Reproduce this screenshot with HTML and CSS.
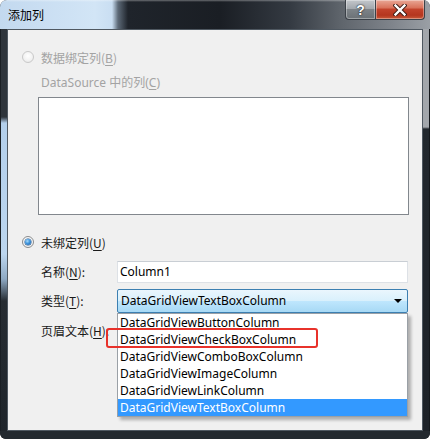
FILE: index.html
```html
<!DOCTYPE html>
<html lang="zh-CN">
<head>
<meta charset="utf-8">
<title>添加列</title>
<link rel="stylesheet" href="styles.css">
</head>
<body>
<div class="window">
  <div class="titlebar">
    <span class="title">添加列</span>
    <div class="caption-btns">
      <div class="cbtn help"><span>?</span></div>
      <div class="cbtn close">
        <svg width="14" height="12" viewBox="0 0 14 12">
          <path d="M2.5 1.5 L11.5 10.5 M11.5 1.5 L2.5 10.5" stroke="#3a1a14" stroke-width="4.2" stroke-linecap="square" fill="none"/>
          <path d="M2.5 1.5 L11.5 10.5 M11.5 1.5 L2.5 10.5" stroke="#ffffff" stroke-width="2.4" stroke-linecap="square" fill="none"/>
        </svg>
      </div>
    </div>
  </div>
  <div class="body">
    <div class="frame-l"></div>
    <div class="client">
      <div class="radio-row disabled">
        <span class="radio"></span>
        <span class="label">数据绑定列(<u>B</u>)</span>
      </div>
      <div class="caption disabled">DataSource 中的列(<u>C</u>)</div>
      <div class="listbox"></div>

      <div class="radio-row second">
        <span class="radio checked"></span>
        <span class="label">未绑定列(<u>U</u>)</span>
      </div>

      <div class="field first">
        <span class="flabel">名称(<u>N</u>):</span>
        <div class="textbox">Column1</div>
      </div>
      <div class="field type">
        <span class="flabel">类型(<u>T</u>):</span>
        <div class="combo">
          <span class="combo-text">DataGridViewTextBoxColumn</span>
          <span class="arrow"></span>
          <ul class="dropdown">
            <li>DataGridViewButtonColumn</li>
            <li>DataGridViewCheckBoxColumn</li>
            <li>DataGridViewComboBoxColumn</li>
            <li>DataGridViewImageColumn</li>
            <li>DataGridViewLinkColumn</li>
            <li class="selected">DataGridViewTextBoxColumn</li>
          </ul>
        </div>
      </div>
      <div class="field header">
        <span class="flabel">页眉文本(<u>H</u>):</span>
        <div class="textbox"></div>
      </div>

      <div class="highlight"></div>
    </div>
    <div class="frame-r"></div>
  </div>
  <div class="frame-b"></div>
</div>
</body>
</html>
```

FILE: styles.css
```css
html, body {
  margin: 0;
  padding: 0;
  background: #ffffff;
}

body {
  font-family: "Noto Sans", "Noto Sans CJK SC", sans-serif;
  font-size: 12px;
  color: #1a1a1a;
}

.window {
  width: 430px;
  height: 439px;
  display: flex;
  flex-direction: column;
  border-radius: 7px 7px 6px 6px;
  overflow: hidden;
  background: #23292f;
}

/* ---------- title bar ---------- */
.titlebar {
  height: 29px;
  flex: none;
  display: flex;
  align-items: flex-start;
  background:
    linear-gradient(to bottom, rgba(255,255,255,0.35) 0, rgba(255,255,255,0) 2px),
    linear-gradient(to right,
      #c3d9ef 0,
      #d2e5f6 95px,
      #c9def2 112px,
      #5d6a78 118px,
      #1f242b 128px,
      #1a1e24 220px,
      #343a42 290px,
      #5e646b 340px,
      #7e838a 390px,
      #9a9fa5 430px);
}

.title {
  font-family: "Noto Sans CJK SC", sans-serif;
  font-size: 12px;
  line-height: 16px;
  color: #000;
  margin: 7px 0 0 8px;
}

.caption-btns {
  margin-left: auto;
  margin-right: 5px;
  display: flex;
}

.cbtn {
  height: 20px;
  box-sizing: border-box;
  border: 1px solid #3b4148;
  border-top: none;
  display: flex;
  align-items: center;
  justify-content: center;
  box-shadow: inset 0 0 0 1px rgba(255,255,255,0.35);
}

.cbtn.help {
  width: 30px;
  border-radius: 0 0 0 4px;
  border-right: none;
  background: linear-gradient(to bottom, #c3c7cb 0, #a3a8ad 45%, #7d8388 50%, #6b7176 100%);
}

.cbtn.help span {
  font-family: "Liberation Sans", sans-serif;
  font-weight: bold;
  font-size: 14px;
  color: #fff;
  text-shadow: 0 0 2px #1c2024, 0 0 1px #1c2024;
  line-height: 14px;
}

.cbtn.close {
  width: 50px;
  border-radius: 0 0 4px 0;
  background: linear-gradient(to bottom, #e9a796 0, #d9735c 40%, #c2422b 50%, #b5361f 80%, #c85a3a 100%);
}

.cbtn.close svg {
  display: block;
}

/* ---------- frame ---------- */
.body {
  flex: 1;
  display: flex;
  min-height: 0;
}

.frame-l {
  width: 7px;
  flex: none;
  background: linear-gradient(to bottom,
    #2e343b 0, #2e343b 88px,
    #b3cfeb 94px, #bcd6ef 225px,
    #8ea9c3 250px, #262c32 272px, #1f252b 100%);
  box-shadow: inset 1px 0 0 #1a1f24;
}

.frame-r {
  width: 7px;
  flex: none;
  background: linear-gradient(to bottom,
    #a3a7ac 0, #a3a7ac 98px,
    #22282e 100px, #1d2228 100%);
  box-shadow: inset -1px 0 0 #14181c;
}

.frame-b {
  height: 8px;
  flex: none;
  background: #23292f;
}

/* ---------- client area ---------- */
.client {
  flex: 1;
  position: relative;
  background: #f0f0f0;
  border: 1px solid #4f5861;
  padding: 19px 0 0 14px;
  box-sizing: border-box;
}

.disabled {
  color: #a3a3a3;
}

u {
  text-decoration: underline;
  text-underline-offset: 2px;
}

.radio-row {
  height: 16px;
  display: flex;
  align-items: center;
  gap: 7px;
  font-family: "Noto Sans CJK SC", sans-serif;
}

.radio-row.second {
  margin-top: 19px;
  color: #1a1a1a;
}

.radio {
  width: 12px;
  height: 12px;
  box-sizing: border-box;
  border-radius: 50%;
  border: 1px solid #c9c9c9;
  background: radial-gradient(circle at 50% 40%, #ffffff 0, #f1f1f1 60%, #e2e2e2 100%);
  flex: none;
  position: relative;
}

.radio.checked {
  border-color: #8a8c8e;
  background: radial-gradient(circle at 50% 40%, #ffffff 0, #f2f2f2 70%, #dcdcdc 100%);
}

.radio.checked::after {
  content: "";
  position: absolute;
  left: 2px;
  top: 2px;
  width: 6px;
  height: 6px;
  border-radius: 50%;
  background: radial-gradient(circle at 40% 35%, #a8dcfb 0, #3f94dc 45%, #15599e 100%);
  box-shadow: 0 0 0 0.5px #1b4f86;
}

.caption {
  margin: 10px 0 0 19px;
  height: 16px;
  line-height: 16px;
  font-family: "Noto Sans", "Noto Sans CJK SC", sans-serif;
}

.listbox {
  margin: 6px 0 0 16px;
  width: 371px;
  height: 118px;
  box-sizing: border-box;
  background: #ffffff;
  border: 1px solid #82878d;
}

.field {
  display: flex;
  align-items: center;
  margin-left: 19px;
}

.field.first { margin-top: 11px; }
.field.type { margin-top: 6px; position: relative; z-index: 2; }
.field.header { margin-top: 7px; }

.flabel {
  width: 76px;
  flex: none;
  font-family: "Noto Sans CJK SC", sans-serif;
  line-height: 16px;
}

.textbox {
  width: 291px;
  height: 22px;
  box-sizing: border-box;
  background: #ffffff;
  border: 1px solid #dde1e6;
  border-top-color: #c9ced4;
  padding-left: 2px;
  line-height: 20px;
  color: #000;
}

.combo {
  width: 291px;
  height: 24px;
  box-sizing: border-box;
  border: 1px solid #3c7fb1;
  border-radius: 2px;
  background: linear-gradient(to bottom, #eaf6fd 0, #d9f0fc 48%, #bee6fd 52%, #a7d9f5 100%);
  position: relative;
  display: flex;
  align-items: center;
  padding-left: 3px;
  color: #000;
}

.combo-text {
  line-height: 20px;
}

.arrow {
  position: absolute;
  right: 5px;
  top: 9px;
  width: 0;
  height: 0;
  border-left: 4px solid transparent;
  border-right: 4px solid transparent;
  border-top: 4px solid #000;
}

.dropdown {
  position: absolute;
  left: -1px;
  top: 23px;
  width: 291px;
  margin: 0;
  padding: 0;
  list-style: none;
  box-sizing: border-box;
  background: #ffffff;
  border: 1px solid #9aa0a6;
  box-shadow: 3px 3px 3px rgba(0, 0, 0, 0.28);
}

.dropdown li {
  height: 17px;
  line-height: 17px;
  padding-left: 2px;
  color: #000;
  white-space: nowrap;
}

.dropdown li.selected {
  background: #3399ff;
  color: #ffffff;
}

.highlight {
  position: absolute;
  left: 98px;
  top: 298px;
  width: 212px;
  height: 20px;
  box-sizing: border-box;
  border: 2px solid #e8322b;
  border-radius: 3px;
  z-index: 5;
}
```
